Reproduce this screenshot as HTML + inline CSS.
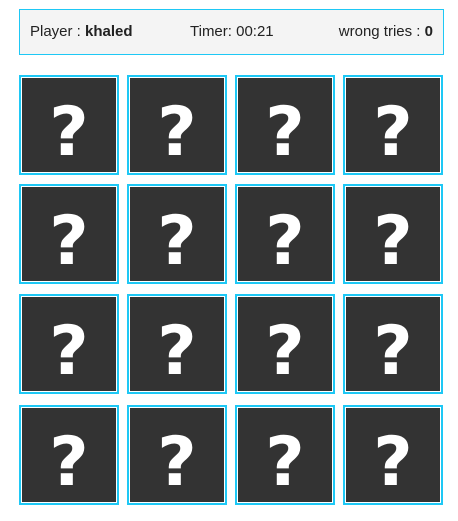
<!DOCTYPE html>
<html><head><style>
body{margin:0;background:#fff;width:458px;height:521px;position:relative;font-family:"Liberation Sans","DejaVu Sans",sans-serif;}
.hdr{position:absolute;left:19px;top:9px;width:423px;height:44px;border:1px solid #1ec8f5;background:#f4f4f4;font-size:15px;color:#222;}
.hdr span{position:absolute;top:13px;}
.c{position:absolute;width:96px;height:96px;border:2px solid #1ec8f5;background:#333;box-shadow:inset 0 0 0 1px #fff;text-align:center;color:#fff;font:bold 68px "DejaVu Sans",sans-serif;line-height:112px;overflow:hidden;}
</style></head><body>
<div class="hdr"><span style="left:10px">Player : <b>khaled</b></span><span style="left:170px">Timer: 00:21</span><span style="right:10px">wrong tries : <b>0</b></span></div>
<div id="g"></div>
<script>
var xs=[19,127,235,343],ys=[75,184,294,405],h='';
for(var r=0;r<4;r++)for(var c=0;c<4;c++)h+='<div class="c" style="left:'+xs[c]+'px;top:'+ys[r]+'px">?</div>';
document.getElementById('g').innerHTML=h;
</script>
</body></html>
